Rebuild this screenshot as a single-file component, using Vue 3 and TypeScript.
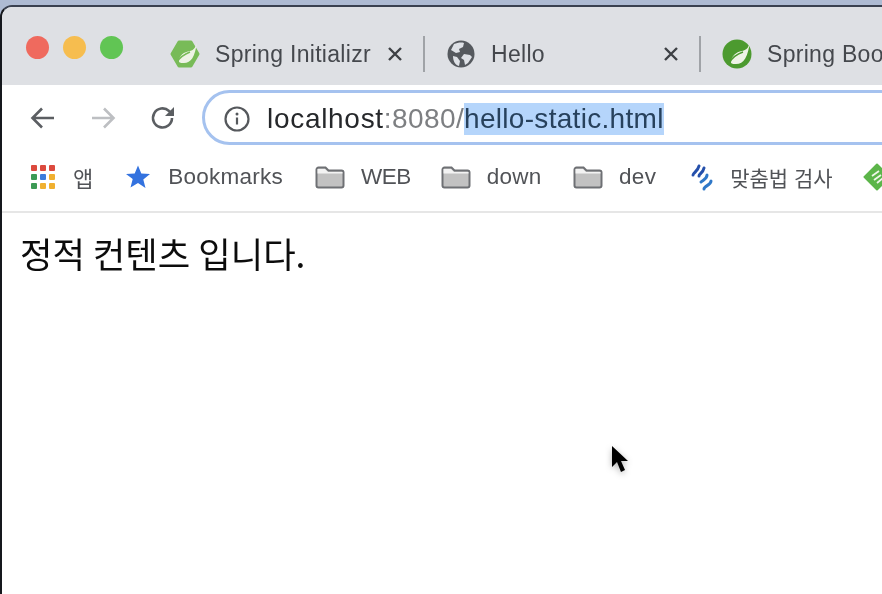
<script setup lang="ts">
interface Bookmark { label: string; kind: 'apps' | 'star' | 'folder' | 'spell' }
const bookmarks: Bookmark[] = [
  { label: '앱', kind: 'apps' },
  { label: 'Bookmarks', kind: 'star' },
  { label: 'WEB', kind: 'folder' },
  { label: 'down', kind: 'folder' },
  { label: 'dev', kind: 'folder' },
  { label: '맞춤법 검사', kind: 'spell' },
]
const appColors = ['#dc4a3e', '#dc4a3e', '#dc4a3e', '#3d9a55', '#3b7ddd', '#f0b030', '#3d9a55', '#f0b030', '#f0b030']
</script>

<template>
  <div class="desktop">
    <div class="window">
      <header class="tabstrip">
        <div class="lights">
          <span class="light red"></span>
          <span class="light yellow"></span>
          <span class="light green"></span>
        </div>
        <div class="tab first">
          <svg class="fav" viewBox="0 0 30 30">
            <path d="M9 3h12l7 12-7 12H9L2 15z" fill="#78bb58" stroke="#78bb58" stroke-width="3" stroke-linejoin="round" />
            <path d="M27 3c-1 5-3 8-7 9-6 1-11 4-11 11 1 1 3 1 5 1 7 0 11-6 13-21z" fill="#eef3e6" />
            <path d="M7 23c3-5 8-8 13-10" stroke="#78bb58" stroke-width="1.5" fill="none" />
          </svg>
          <span class="title t1">Spring Initializr</span>
          <svg class="close" viewBox="0 0 16 16"><path d="M2 2l12 12M14 2L2 14" /></svg>
        </div>
        <i class="sep"></i>
        <div class="tab second">
          <svg class="fav globe" viewBox="0 0 28 28">
            <circle cx="14" cy="14" r="13.500" fill="#55595e" />
            <path d="M7 4c3-1 7-2 10-1l-1 4-4 2 1 3-4 1-5-3zM17 14l6 1 2 2-4 6-3 2-1-5-3-2zM6 16l4 1 3 4-1 5c-4-1-6-5-6-10z" fill="#dee1e6" />
          </svg>
          <span class="title t2">Hello</span>
          <svg class="close" viewBox="0 0 16 16"><path d="M2 2l12 12M14 2L2 14" /></svg>
        </div>
        <i class="sep"></i>
        <div class="tab third">
          <svg class="fav" viewBox="0 0 30 30">
            <circle cx="15" cy="15" r="14.500" fill="#4c9a2f" />
            <path d="M28 2c-1 6-3 9-8 10-6 1-11 5-11 12 1 1 3 1 5 1 8 0 12-7 14-23z" fill="#eef3e6" />
            <path d="M7 24c3-5 8-9 14-11" stroke="#4c9a2f" stroke-width="1.5" fill="none" />
          </svg>
          <span class="title">Spring Boot</span>
        </div>
      </header>

      <div class="toolbar">
        <svg class="nav" viewBox="0 0 26 26"><path d="M24 13H3M12 3.500L2.500 13l9.500 9.500" /></svg>
        <svg class="nav forward" viewBox="0 0 26 26"><path d="M2 13h21M14 3.500l9.500 9.500-9.500 9.500" /></svg>
        <svg class="nav reload" viewBox="0 0 26 26">
          <path d="M22 13a9.500 9.500 0 1 1-3-7l3 2.500" />
          <path class="solid" d="M24 2v9h-9z" />
        </svg>
        <div class="omnibox">
          <svg class="info" viewBox="0 0 26 26">
            <circle cx="13" cy="13" r="11.500" />
            <path d="M13 11.500v7" />
            <circle class="dot" cx="13" cy="8" r="1.500" />
          </svg>
          <span class="url"><span class="host">localhost</span><span class="port">:8080/</span><span class="sel">hello-static.html</span></span>
        </div>
      </div>

      <nav class="bookmarks">
        <div v-for="b in bookmarks" :key="b.label" class="mark" :class="'k-' + b.kind">
          <span v-if="b.kind === 'apps'" class="apps">
            <i v-for="(c, i) in appColors" :key="i" :style="{ background: c }"></i>
          </span>
          <svg v-else-if="b.kind === 'star'" class="star" viewBox="0 0 24 24">
            <path d="M12 .5l3.300 8 8.700.6-6.700 5.500 2.200 8.500L12 18l-7.500 4.600 2.200-8.500L0 9.100l8.700-.6z" fill="#3372df" />
          </svg>
          <svg v-else-if="b.kind === 'folder'" class="folder" viewBox="0 0 30 24">
            <path d="M1.500 4.500a2 2 0 0 1 2-2h7l3 3h13a2 2 0 0 1 2 2v13a2 2 0 0 1-2 2h-23a2 2 0 0 1-2-2z" fill="#c2c2c2" stroke="#6e7074" stroke-width="2" />
            <path d="M2.500 4h7.500l3 3h14.500v1.500h-25z" fill="#f3f3f3" />
          </svg>
          <svg v-else class="spell" viewBox="0 0 22 27">
            <path d="M2 11c0-2 5-4 6-9M8 12c0-2 4-3 5-8" stroke="#2550ab" stroke-width="3" fill="none" stroke-linecap="round" />
            <path d="M10 18c2-2 6-3 6-7M13 25c0-3 7-4 7-8" stroke="#2f78c8" stroke-width="3" fill="none" stroke-linecap="round" />
          </svg>
          <span class="mark-label">{{ b.label }}</span>
        </div>
        <svg class="leaf" viewBox="0 0 28 28">
          <path d="M14 1.500l12.500 12.500-12.500 12.500L1.500 14z" fill="#5cb54a" stroke="#5cb54a" stroke-width="2" stroke-linejoin="round" />
          <path d="M9 13l7-5M11 17l7-5M14 20l6-5" stroke="#eef6e8" stroke-width="1.800" fill="none" />
        </svg>
      </nav>

      <main class="page">
        <p class="body-text">정적 컨텐츠 입니다.</p>
        <svg class="cursor" viewBox="0 0 20 32">
          <path d="M2 1l0 21 5-5 4 10 4-2-4-9h7z" fill="#000" />
        </svg>
      </main>
    </div>
  </div>
</template>

<style>
html, body { margin: 0; padding: 0; }
</style>

<style scoped>
.desktop {
  width: 882px;
  height: 594px;
  overflow: hidden;
  background: #aebbd3;
  padding-top: 5px;
  box-sizing: border-box;
  font-family: "Liberation Sans", "Noto Sans CJK KR", sans-serif;
  filter: blur(0.45px);
}
.window {
  height: 589px;
  box-sizing: border-box;
  background: #fff;
  border-top: 2px solid #3a4150;
  border-left: 2px solid #15181d;
  border-top-left-radius: 12px;
  overflow: hidden;
  display: flex;
  flex-direction: column;
}
.tabstrip {
  height: 78px;
  flex: none;
  background: #dee0e4;
  display: flex;
  align-items: flex-start;
  white-space: nowrap;
}
.lights {
  display: flex;
  gap: 14px;
  padding: 29px 0 0 24px;
  width: 144px;
  flex: none;
  box-sizing: border-box;
}
.light { width: 23px; height: 23px; border-radius: 50%; }
.red { background: #ef6a5e; }
.yellow { background: #f6bd4f; }
.green { background: #61c554; }
.tab {
  display: flex;
  align-items: center;
  height: 36px;
  margin-top: 29px;
  flex: none;
  color: #45484d;
  font-size: 23px;
  letter-spacing: .3px;
}
.first { width: 277px; padding-left: 24px; box-sizing: border-box; }
.second { width: 274px; padding-left: 22px; box-sizing: border-box; }
.third { padding-left: 21px; }
.fav { width: 30px; height: 30px; flex: none; }
.globe { width: 28px; height: 28px; }
.title { margin-left: 15px; width: 171px; }
.title.t1 { width: 172px; }
.title.t2 { margin-left: 16px; width: 172px; }
.close { width: 16px; height: 16px; fill: none; stroke: #3e4145; stroke-width: 2.400; flex: none; }
.sep { width: 2px; height: 36px; margin-top: 29px; background: #a0a3a7; flex: none; }
.toolbar {
  height: 65px;
  flex: none;
  display: flex;
  align-items: center;
  padding: 0 0 0 28px;
  box-sizing: border-box;
  gap: 34px;
}
.nav { width: 26px; height: 26px; fill: none; stroke: #5b5e62; stroke-width: 2.600; flex: none; }
.nav.forward { stroke: #bdbfc2; }
.solid { fill: #5b5e62; stroke: none; }
.omnibox {
  flex: none;
  width: 760px;
  height: 55px;
  margin-left: -8px;
  box-sizing: border-box;
  border: 3px solid #a5c2ef;
  border-radius: 28px;
  display: flex;
  align-items: center;
  padding: 2px 0 0 19px;
  font-size: 28px;
  letter-spacing: .4px;
  color: #222;
}
.info { width: 26px; height: 26px; flex: none; fill: none; stroke: #55585c; stroke-width: 2.200; }
.info .dot { fill: #55585c; stroke: none; }
.url { margin-left: 17px; white-space: nowrap; }
.host { color: #26282b; letter-spacing: .7px; }
.port { color: #7d7f82; }
.sel { background: #b5d5fb; color: #27415c; display: inline-block; line-height: 32px; letter-spacing: .3px; }
.bookmarks {
  height: 63px;
  flex: none;
  display: flex;
  align-items: center;
  padding-left: 29px;
  padding-bottom: 7px;
  box-sizing: border-box;
  border-bottom: 2px solid #e6e6e6;
  font-size: 22.500px;
  color: #515357;
  white-space: nowrap;
  gap: 30px;
}
.mark { display: flex; align-items: center; flex: none; }
.k-apps { font-size: 22px; }
.k-star, .k-folder { letter-spacing: .25px; }
.k-star { margin: 0 2px 0 3px; }
.k-folder:nth-child(3) { letter-spacing: -.5px; }
.k-folder:nth-child(4) { margin-right: 1.500px; }
.k-spell { margin-left: 5px; font-size: 21px; }
.apps {
  width: 24px;
  height: 24px;
  display: grid;
  grid-template-columns: repeat(3, 6px);
  grid-auto-rows: 6px;
  gap: 3px;
  margin-right: 18px;
}
.apps i { display: block; border-radius: 1px; }
.star { width: 24px; height: 24px; margin-right: 18px; }
.folder { width: 30px; height: 24px; margin-right: 16px; }
.spell { width: 22px; height: 27px; margin-right: 17px; }
.leaf { width: 28px; height: 28px; flex: none; }
.page {
  flex: 1;
  position: relative;
}
.body-text {
  margin: 0;
  padding: 18px 0 0 18px;
  font-size: 35.300px;
  line-height: 44px;
  color: #0c0c0c;
  font-family: "Noto Sans CJK KR", sans-serif;
}
.cursor {
  position: absolute;
  left: 608px;
  top: 232px;
  width: 20px;
  height: 32px;
  filter: drop-shadow(0 2px 3px rgba(0,0,0,.3));
}
</style>
